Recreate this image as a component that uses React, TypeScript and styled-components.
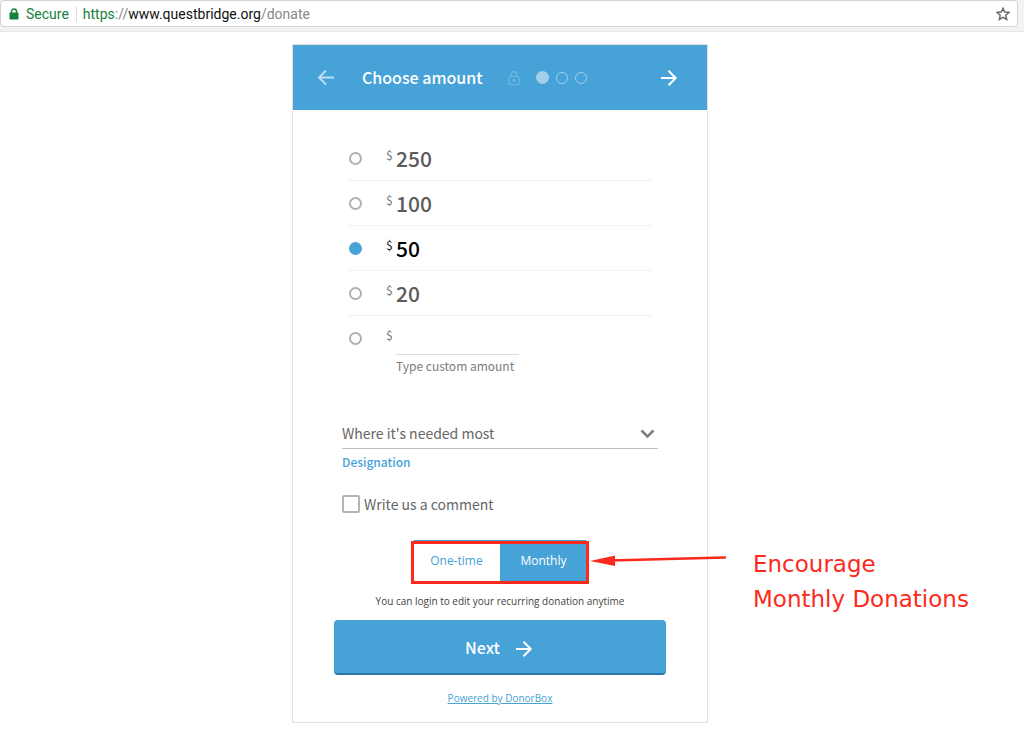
import { useState } from "react";
import styled, { createGlobalStyle } from "styled-components";

const BLUE = "#46a2d7";
const RED = "#fc2a1c";
const SANS = `"Noto Sans CJK SC", "Noto Sans", sans-serif`;
const OPEN = `"Open Sans", "Noto Sans", sans-serif`;

const GlobalStyle = createGlobalStyle`
  *, *::before, *::after { box-sizing: border-box; }
  body { margin: 0; background: #fff; font-family: ${SANS}; color: #666; }
  button, input, select { font: inherit; color: inherit; margin: 0; }
`;

const BrowserBar = styled.header`
  height: 32px;
  padding-right: 6px;
  background: #f2f2f2;
  border-bottom: 1px solid #e6e6e6;
`;

const AddressBox = styled.div`
  display: flex;
  align-items: center;
  height: 27px;
  padding: 0 7px 0 8px;
  background: #fff;
  border: 1px solid #d4d4d4;
  border-radius: 4px;
  font: 14px/20px Roboto, sans-serif;
`;

const Secure = styled.span`
  display: flex;
  align-items: center;
  gap: 7px;
  color: #16803c;
  padding-right: 7px;
  border-right: 1px solid #dcdcdc;
  line-height: 16px;
`;

const Address = styled.span`
  flex: 1;
  padding-left: 6px;
  color: #888;
`;
const Scheme = styled.span`color: #16803c;`;
const Host = styled.span`color: #111;`;

const IconButton = styled.button<{ $dim?: boolean }>`
  display: flex;
  padding: 0;
  border: 0;
  background: none;
  color: inherit;
  opacity: ${(p) => (p.$dim ? 0.65 : 1)};
  cursor: pointer;
`;

const Page = styled.main`
  display: flex;
  justify-content: center;
  padding: 12px 24px 13px 0;
`;

const Card = styled.form`
  width: 416px;
  border: 1px solid #e0e0e0;
  background: #fff;
`;

const CardHeader = styled.div`
  display: flex;
  align-items: center;
  height: 65px;
  padding: 0 29px 0 24px;
  background: ${BLUE};
  color: #fff;
`;

const Title = styled.h1`
  margin: 0 25px 0 27px;
  padding-bottom: 2px;
  font-size: 16px;
  line-height: 24px;
  font-weight: 500;
`;

const Steps = styled.div`
  flex: 1;
  display: flex;
  align-items: center;
  gap: 7px;
  margin-left: 16px;
`;

const Step = styled.span<{ $current?: boolean }>`
  width: ${(p) => (p.$current ? 13 : 12)}px;
  height: ${(p) => (p.$current ? 13 : 12)}px;
  border-radius: 50%;
  border: 1px solid #a3d1eb;
  background: ${(p) => (p.$current ? "#a3d1eb" : "transparent")};
`;

const Amounts = styled.div`
  padding: 26px 56px 0;
`;

const AmountRow = styled.label<{ $last?: boolean }>`
  display: flex;
  align-items: flex-start;
  height: ${(p) => (p.$last ? 39 : 45)}px;
  border-bottom: ${(p) => (p.$last ? "0" : "1px dotted #e4e4e4")};
  cursor: pointer;
`;

const Radio = styled.input`
  appearance: none;
  width: 13px;
  height: 13px;
  margin: 16px 24px 0 0 !important;
  border: 2px solid #b0b0b0;
  border-radius: 50%;
  &:checked {
    border-color: ${BLUE};
    background: ${BLUE};
  }
`;

const Currency = styled.span<{ $on?: boolean }>`
  width: 10px;
  padding-top: 9px;
  font-size: 12px;
  line-height: 20px;
  color: ${(p) => (p.$on ? "#222" : "#777")};
`;

const Amount = styled.span<{ $on?: boolean }>`
  padding-top: 7px;
  font-size: 21px;
  line-height: 30px;
  font-weight: 500;
  color: ${(p) => (p.$on ? "#000" : "#5c5c5c")};
`;

const CustomInput = styled.input`
  width: 123px;
  height: 39px;
  padding: 0;
  border: 0;
  border-bottom: 1px solid #dcdcdc;
  background: none;
  font-size: 21px;
  outline: none;
`;

const CustomHint = styled.label`
  display: block;
  margin-left: 47px;
  font-size: 12px;
  line-height: 22px;
  color: #7c7c7c;
`;

const Details = styled.div`
  padding: 43px 49px 0;
`;

const SelectBox = styled.div`
  display: grid;
  align-items: center;
  border-bottom: 1px solid #bdbdbd;
  > * { grid-area: 1 / 1; }
  > svg { justify-self: end; margin-right: 3px; pointer-events: none; }
`;

const Select = styled.select`
  appearance: none;
  width: 100%;
  height: 28px;
  padding: 0 0 2px;
  border: 0;
  background: none;
  font-size: 14px;
`;

const SelectLabel = styled.label`
  display: block;
  padding-top: 3px;
  font-size: 12px;
  line-height: 20px;
  font-weight: 500;
  color: ${BLUE};
`;

const Comment = styled.label`
  display: flex;
  align-items: center;
  gap: 4px;
  margin-top: 22px;
  font-size: 14px;
  line-height: 20px;
`;

const CheckBox = styled.input`
  appearance: none;
  width: 18px;
  height: 18px;
  border: 2px solid #b5b5b5;
  border-radius: 2px;
  &:checked { background: ${BLUE}; }
`;

const Frequency = styled.div`
  position: relative;
  display: flex;
  width: 176px;
  margin: 26px auto 0;
  border: 1px solid ${BLUE};
  border-radius: 3px;
`;

const FrequencyButton = styled.button<{ $on?: boolean }>`
  flex: 1;
  height: 41px;
  padding: 0 0 1px;
  border: 0;
  background: ${(p) => (p.$on ? BLUE : "#fff")};
  color: ${(p) => (p.$on ? "#fff" : BLUE)};
  font: 500 12px/20px ${OPEN};
  cursor: pointer;
`;

const Highlight = styled.div`
  position: absolute;
  inset: 0 -2px -2px;
  border: 3px solid ${RED};
  pointer-events: none;
`;

const Callout = styled.div`
  position: absolute;
  top: 6px;
  left: 100%;
  display: flex;
  align-items: flex-start;
  gap: 27px;
  pointer-events: none;
  > svg { margin-left: 3px; flex: none; margin-top: 6px; }
`;

const CalloutText = styled.p`
  margin: 0;
  font: 23px/35px "DejaVu Sans", sans-serif;
  color: ${RED};
  white-space: nowrap;
`;

const Note = styled.p`
  margin: 8px 0 9px;
  font: 10px/20px ${OPEN};
  color: #444;
  text-align: center;
`;

const NextButton = styled.button`
  display: flex;
  align-items: center;
  justify-content: center;
  gap: 15px;
  width: calc(100% - 82px);
  height: 55px;
  margin: 0 auto;
  padding: 0 2px 0 0;
  border: 0;
  border-bottom: 2px solid #2c77a5;
  border-radius: 4px;
  background: ${BLUE};
  color: #fff;
  font-size: 16px;
  font-weight: 500;
  cursor: pointer;
  > svg { margin-top: 4px; }
`;

const Footer = styled.footer`
  padding: 13px 0 14px;
  font: 10px/20px ${OPEN};
  text-align: center;
`;

const FooterLink = styled.a`color: ${BLUE};`;

function Arrow({ left }: { left?: boolean }) {
  return (
    <svg width="18" height="18" viewBox="0 0 18 18" fill="none" stroke="currentColor" strokeWidth="2" aria-hidden>
      {left ? <path d="M17 8.5H2.5M9 1.5L2 8.5L9 15.5" strokeWidth="1.9" /> : <path d="M1 9H15.5M8.5 1.8L15.7 9L8.5 16.2" />}
    </svg>
  );
}

const AMOUNTS = ["250", "100", "50", "20"];

export default function App() {
  const [amount, setAmount] = useState("50");
  const [monthly, setMonthly] = useState(true);

  return (
    <>
      <GlobalStyle />
      <BrowserBar>
        <AddressBox>
          <Secure>
            <svg width="10" height="12" viewBox="0 0 10 12" aria-hidden>
              <path d="M2.5 6V3.5a2.5 2.5 0 0 1 5 0V6" fill="none" stroke="#16803c" strokeWidth="1.4" />
              <rect x="0.5" y="4.5" width="9" height="7" rx="0.8" fill="#16803c" />
            </svg>
            Secure
          </Secure>
          <Address>
            <Scheme>https</Scheme>://<Host>www.questbridge.org</Host>/donate
          </Address>
          <IconButton type="button" aria-label="Bookmark this page">
            <svg width="14" height="14" viewBox="0 0 14 14" fill="none" stroke="#6a6a6a" strokeWidth="1.5" aria-hidden>
              <path d="M7 1.2L8.7 5.1L13 5.5L9.8 8.3L10.7 12.5L7 10.3L3.3 12.5L4.2 8.3L1 5.5L5.3 5.1Z" />
            </svg>
          </IconButton>
        </AddressBox>
      </BrowserBar>
      <Page>
        <Card onSubmit={(e) => e.preventDefault()}>
          <CardHeader>
            <IconButton type="button" $dim aria-label="Back">
              <Arrow left />
            </IconButton>
            <Title>Choose amount</Title>
            <svg width="12" height="14" viewBox="0 0 12 14" fill="none" stroke="#71b8e0" strokeWidth="1.2" aria-hidden>
              <rect x="1" y="5.5" width="10" height="8" rx="1" />
              <path d="M3.5 5.5V3.2a2.5 2.5 0 0 1 5 0V5.5" />
              <circle cx="6" cy="9.5" r="1" fill="#71b8e0" />
            </svg>
            <Steps>
              <Step $current />
              <Step />
              <Step />
            </Steps>
            <IconButton type="button" aria-label="Forward">
              <Arrow />
            </IconButton>
          </CardHeader>

          <Amounts>
            {AMOUNTS.map((a) => (
              <AmountRow key={a}>
                <Radio type="radio" name="amount" checked={amount === a} onChange={() => setAmount(a)} />
                <Currency $on={amount === a}>$</Currency>
                <Amount $on={amount === a}>{a}</Amount>
              </AmountRow>
            ))}
            <AmountRow as="div" $last>
              <Radio
                type="radio"
                name="amount"
                aria-label="Custom amount"
                checked={amount === "custom"}
                onChange={() => setAmount("custom")}
              />
              <Currency>$</Currency>
              <CustomInput id="custom" type="text" inputMode="decimal" onFocus={() => setAmount("custom")} />
            </AmountRow>
            <CustomHint htmlFor="custom">Type custom amount</CustomHint>
          </Amounts>

          <Details>
            <SelectBox>
              <Select id="designation">
                <option>Where it's needed most</option>
              </Select>
              <svg width="15" height="10" viewBox="0 0 15 10" fill="none" stroke="#808080" strokeWidth="2.6" aria-hidden>
                <path d="M1.5 1.5L7.5 7.5L13.5 1.5" />
              </svg>
            </SelectBox>
            <SelectLabel htmlFor="designation">Designation</SelectLabel>
            <Comment>
              <CheckBox type="checkbox" />
              Write us a comment
            </Comment>
          </Details>

          <Frequency>
            <FrequencyButton type="button" $on={!monthly} onClick={() => setMonthly(false)}>
              One-time
            </FrequencyButton>
            <FrequencyButton type="button" $on={monthly} onClick={() => setMonthly(true)}>
              Monthly
            </FrequencyButton>
            <Highlight />
            <Callout>
              <svg width="136" height="14" viewBox="0 0 136 14" aria-hidden>
                <path d="M20 7.5L135 4.5" stroke={RED} strokeWidth="2.6" strokeLinecap="round" />
                <path d="M0 8L25 2.5V13Z" fill={RED} />
              </svg>
              <CalloutText>
                Encourage
                <br />
                Monthly Donations
              </CalloutText>
            </Callout>
          </Frequency>
          <Note>You can login to edit your recurring donation anytime</Note>

          <NextButton type="submit">
            Next
            <Arrow />
          </NextButton>
          <Footer>
            <FooterLink href="https://donorbox.org">Powered by DonorBox</FooterLink>
          </Footer>
        </Card>
      </Page>
    </>
  );
}
